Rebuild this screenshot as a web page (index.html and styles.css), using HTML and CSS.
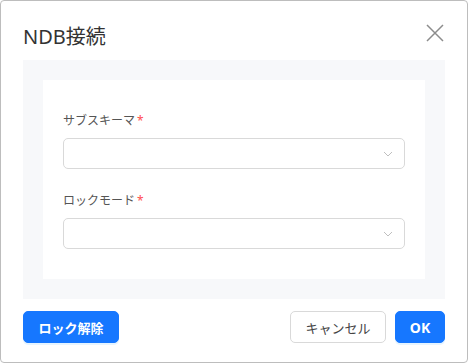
FILE: index.html
```html
<!DOCTYPE html>
<html lang="ja">
<head>
    <meta charset="UTF-8">
    <meta name="viewport" content="width=device-width, initial-scale=1.0">
    <title>NDB接続</title>
    <link rel="stylesheet" href="styles.css">
</head>
<body>
    <div class="dialog">
        <div class="dialog-header">
            <h2>NDB接続</h2>
            <button class="close-btn" aria-label="close">
                <svg width="20" height="20" viewBox="0 0 20 20">
                    <path d="M2 2 L18 18 M18 2 L2 18" stroke="#8c8c8c" stroke-width="1.5" fill="none"/>
                </svg>
            </button>
        </div>

        <div class="dialog-body">
            <div class="form-panel">
                <div class="form-item">
                    <label>サブスキーマ<span class="required">*</span></label>
                    <div class="select">
                        <svg width="10" height="6" viewBox="0 0 10 6">
                            <path d="M1 1 L5 5 L9 1" stroke="#bfbfbf" stroke-width="1" fill="none"/>
                        </svg>
                    </div>
                </div>
                <div class="form-item">
                    <label>ロックモード<span class="required">*</span></label>
                    <div class="select">
                        <svg width="10" height="6" viewBox="0 0 10 6">
                            <path d="M1 1 L5 5 L9 1" stroke="#bfbfbf" stroke-width="1" fill="none"/>
                        </svg>
                    </div>
                </div>
            </div>
        </div>

        <div class="dialog-footer">
            <button class="btn btn-primary btn-wide">ロック解除</button>
            <div class="footer-right">
                <button class="btn btn-default btn-wide">キャンセル</button>
                <button class="btn btn-primary btn-ok">OK</button>
            </div>
        </div>
    </div>
</body>
</html>
```

FILE: styles.css
```css
* {
    margin: 0;
    padding: 0;
    box-sizing: border-box;
    font-family: "Noto Sans", "Noto Sans CJK JP", sans-serif;
}

body {
    background-color: #fff;
    width: 468px;
    height: 363px;
}

.dialog {
    width: 468px;
    height: 363px;
    border: 1px solid #bdbdbd;
    border-radius: 4px;
    background-color: #fff;
    display: flex;
    flex-direction: column;
}

.dialog-header {
    display: flex;
    justify-content: space-between;
    align-items: flex-start;
    padding: 22px 22px 9px;
}

.dialog-header h2 {
    font-size: 20px;
    line-height: 28px;
    font-weight: 400;
    color: #333;
}

.close-btn {
    border: none;
    background: none;
    width: 20px;
    height: 20px;
    cursor: pointer;
    display: flex;
}

.dialog-body {
    margin: 0 22px;
    padding: 20px;
    background-color: #f7f8fa;
}

.form-panel {
    background-color: #fff;
    padding: 31px 20px 30px;
    display: flex;
    flex-direction: column;
    gap: 22px;
}

.form-item label {
    display: block;
    font-size: 12px;
    line-height: 20px;
    color: #555;
    margin-bottom: 7px;
}

.required {
    color: #ff4d4f;
    margin-left: 2px;
}

.select {
    height: 31px;
    border: 1px solid #d9d9d9;
    border-radius: 5px;
    display: flex;
    align-items: center;
    justify-content: flex-end;
    padding-right: 11px;
}

.dialog-footer {
    display: flex;
    justify-content: space-between;
    align-items: center;
    padding: 12px 22px 0;
}

.footer-right {
    display: flex;
    gap: 9px;
}

.btn {
    height: 32px;
    padding: 0;
    border-radius: 5px;
    font-size: 13px;
    white-space: nowrap;
    cursor: pointer;
}

.btn-primary {
    background-color: #1677ff;
    border: 1px solid #1677ff;
    color: #fff;
    font-weight: 700;
    box-shadow: 0 2px 0 rgba(5, 145, 255, 0.1);
}

.btn-wide {
    width: 96px;
}

.btn-ok {
    width: 50px;
    font-size: 14px;
}

.btn-default {
    background-color: #fff;
    border: 1px solid #d9d9d9;
    color: #444;
}
```
